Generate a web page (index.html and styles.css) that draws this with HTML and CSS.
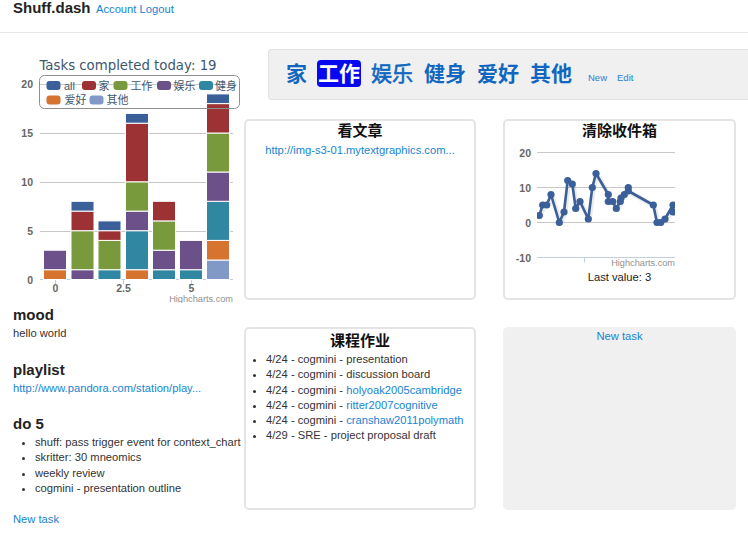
FILE: index.html
```html
<!DOCTYPE html>
<html>
<head>
<meta charset="utf-8">
<title>Shuff.dash</title>
<link rel="stylesheet" href="styles.css">
</head>
<body>
<header class="topbar">
  <span class="brand">Shuff.dash</span>
  <a class="toplink" href="#">Account</a> <a class="toplink" href="#">Logout</a>
</header>
<div class="main">
  <aside class="sidebar">
    <svg class="bar-chart" width="244" height="250" viewBox="0 53 244 250">
      <text class="hc-title" x="128" y="70" text-anchor="middle">Tasks completed today: 19</text>
      <g stroke="#c8c8c8" stroke-width="1">
        <line x1="40" y1="84.5" x2="233" y2="84.5"/>
        <line x1="40" y1="133.5" x2="233" y2="133.5"/>
        <line x1="40" y1="182.5" x2="233" y2="182.5"/>
        <line x1="40" y1="231.5" x2="233" y2="231.5"/>
      </g>
      <g stroke="#c0d0e0" stroke-width="1">
        <line x1="40" y1="279.5" x2="233" y2="279.5"/>
        <line x1="55.5" y1="279.5" x2="55.5" y2="284.5"/>
        <line x1="123.5" y1="279.5" x2="123.5" y2="284.5"/>
        <line x1="191.5" y1="279.5" x2="191.5" y2="284.5"/>
      </g>
      <g class="hc-label" text-anchor="end">
        <text x="33" y="88">20</text>
        <text x="33" y="137">15</text>
        <text x="33" y="186">10</text>
        <text x="33" y="235">5</text>
        <text x="33" y="284">0</text>
      </g>
      <g class="hc-label" text-anchor="middle">
        <text x="55.5" y="291.5">0</text>
        <text x="123.5" y="291.5">2.5</text>
        <text x="191.5" y="291.5">5</text>
      </g>
      <g stroke="#ffffff" stroke-width="1">
        <rect x="43.5" y="269.7" width="23" height="9.8" fill="#d6732f"/>
        <rect x="43.5" y="250.2" width="23" height="19.5" fill="#6c5089"/>

        <rect x="71" y="269.7" width="23" height="9.8" fill="#6c5089"/>
        <rect x="71" y="230.7" width="23" height="39" fill="#789a3c"/>
        <rect x="71" y="211.1" width="23" height="19.6" fill="#9c3234"/>
        <rect x="71" y="201.3" width="23" height="9.8" fill="#3b5f99"/>

        <rect x="98" y="269.7" width="23" height="9.8" fill="#3087a1"/>
        <rect x="98" y="240.4" width="23" height="29.3" fill="#789a3c"/>
        <rect x="98" y="230.7" width="23" height="9.7" fill="#9c3234"/>
        <rect x="98" y="220.9" width="23" height="9.8" fill="#3b5f99"/>

        <rect x="125.5" y="269.7" width="23" height="9.8" fill="#d6732f"/>
        <rect x="125.5" y="230.7" width="23" height="39" fill="#3087a1"/>
        <rect x="125.5" y="211.1" width="23" height="19.6" fill="#6c5089"/>
        <rect x="125.5" y="181.8" width="23" height="29.3" fill="#789a3c"/>
        <rect x="125.5" y="123.2" width="23" height="58.6" fill="#9c3234"/>
        <rect x="125.5" y="113.4" width="23" height="9.8" fill="#3b5f99"/>

        <rect x="152.5" y="269.7" width="23" height="9.8" fill="#3087a1"/>
        <rect x="152.5" y="250.2" width="23" height="19.5" fill="#6c5089"/>
        <rect x="152.5" y="220.9" width="23" height="29.3" fill="#789a3c"/>
        <rect x="152.5" y="201.3" width="23" height="19.6" fill="#9c3234"/>

        <rect x="179.5" y="269.7" width="23" height="9.8" fill="#3087a1"/>
        <rect x="179.5" y="240.4" width="23" height="29.3" fill="#6c5089"/>

        <rect x="206.5" y="260" width="23" height="19.5" fill="#8099c7"/>
        <rect x="206.5" y="240.4" width="23" height="19.6" fill="#d6732f"/>
        <rect x="206.5" y="201.3" width="23" height="39.1" fill="#3087a1"/>
        <rect x="206.5" y="172" width="23" height="29.3" fill="#6c5089"/>
        <rect x="206.5" y="133" width="23" height="39" fill="#789a3c"/>
        <rect x="206.5" y="103.6" width="23" height="29.4" fill="#9c3234"/>
        <rect x="206.5" y="93.9" width="23" height="9.7" fill="#3b5f99"/>
      </g>
      <rect x="39.5" y="75.5" width="200" height="33" rx="5" fill="none" stroke="#909090"/>
      <g>
        <rect x="46.5" y="81" width="14" height="9" rx="3" fill="#3b5f99"/>
        <rect x="82" y="81" width="14" height="9" rx="3" fill="#9c3234"/>
        <rect x="113.5" y="81" width="14" height="9" rx="3" fill="#789a3c"/>
        <rect x="157" y="81" width="14" height="9" rx="3" fill="#6c5089"/>
        <rect x="199" y="81" width="14" height="9" rx="3" fill="#3087a1"/>
        <rect x="46.5" y="95.5" width="14" height="9" rx="3" fill="#d6732f"/>
        <rect x="89.5" y="95.5" width="14" height="9" rx="3" fill="#8099c7"/>
      </g>
      <g class="hc-legend">
        <text x="64" y="89.5">all</text>
        <text x="98.5" y="89.5">家</text>
        <text x="130.5" y="89.5">工作</text>
        <text x="173.5" y="89.5">娱乐</text>
        <text x="215" y="89.5">健身</text>
        <text x="64.5" y="104">爱好</text>
        <text x="106.5" y="104">其他</text>
      </g>
      <text class="hc-credit" x="233" y="301.5" text-anchor="end">Highcharts.com</text>
    </svg>

    <section class="block first">
      <h3>mood</h3>
      <p>hello world</p>
    </section>
    <section class="block">
      <h3>playlist</h3>
      <p><a href="#">http://www.pandora.com/station/play...</a></p>
    </section>
    <section class="block">
      <h3>do 5</h3>
      <ul class="tasks">
        <li>shuff: pass trigger event for context_chart</li>
        <li>skritter: 30 mneomics</li>
        <li>weekly review</li>
        <li>cogmini - presentation outline</li>
      </ul>
    </section>
    <a class="new-task" href="#">New task</a>
  </aside>

  <div class="content">
    <nav class="well">
      <a class="cat" href="#">家</a>
      <a class="cat active" href="#">工作</a>
      <a class="cat thin" href="#">娱乐</a>
      <a class="cat" href="#">健身</a>
      <a class="cat" href="#">爱好</a>
      <a class="cat" href="#">其他</a>
      <a class="mini new" href="#">New</a>
      <a class="mini edit" href="#">Edit</a>
    </nav>

    <div class="cards">
      <div class="card">
        <h2>看文章</h2>
        <a class="card-link" href="#">http://img-s3-01.mytextgraphics.com...</a>
      </div>

      <div class="card">
        <h2>清除收件箱</h2>
        <svg class="line-chart" width="229" height="127" viewBox="505 143 229 127">
          <defs>
            <clipPath id="plot"><rect x="537" y="143" width="138" height="125"/></clipPath>
          </defs>
          <g stroke="#c8c8c8" stroke-width="1">
            <line x1="537" y1="152.5" x2="675" y2="152.5"/>
            <line x1="537" y1="187.5" x2="675" y2="187.5"/>
            <line x1="537" y1="222.5" x2="675" y2="222.5"/>
          </g>
          <g stroke="#c0d0e0" stroke-width="1">
            <line x1="537" y1="257.5" x2="675" y2="257.5"/>
            <line x1="584.5" y1="257.5" x2="584.5" y2="262.5"/>
          </g>
          <g class="hc-label" text-anchor="end">
            <text x="531" y="156.5">20</text>
            <text x="531" y="191.5">10</text>
            <text x="531" y="226.5">0</text>
            <text x="531" y="261.5">-10</text>
          </g>
          <g clip-path="url(#plot)">
            <polyline fill="none" stroke="rgba(0,0,0,0.08)" stroke-width="5" stroke-linejoin="round" transform="translate(1,1)"
              points="539.3,215.5 542.7,205 546.7,205 551,194.5 559.3,222.5 564,212 567.7,180.5 572.3,184 575.7,208.5 580,201.5 588.3,219 592.3,187.5 596,173.5 608.3,194.5 608.3,201.5 612.7,201.5 616.3,208.5 620.3,201.5 621,198 624.3,194.5 628.3,187.5 628.3,191 653.3,205 657,222.5 660.7,222.5 665,219 673,205 673,212 678,212"/>
            <polyline fill="none" stroke="#3b5f99" stroke-width="2.6" stroke-linejoin="round"
              points="539.3,215.5 542.7,205 546.7,205 551,194.5 559.3,222.5 564,212 567.7,180.5 572.3,184 575.7,208.5 580,201.5 588.3,219 592.3,187.5 596,173.5 608.3,194.5 608.3,201.5 612.7,201.5 616.3,208.5 620.3,201.5 621,198 624.3,194.5 628.3,187.5 628.3,191 653.3,205 657,222.5 660.7,222.5 665,219 673,205 673,212 678,212"/>
            <g fill="#3b5f99">
              <circle cx="539.3" cy="215.5" r="3.6"/>
              <circle cx="542.7" cy="205" r="3.6"/>
              <circle cx="546.7" cy="205" r="3.6"/>
              <circle cx="551" cy="194.5" r="3.6"/>
              <circle cx="559.3" cy="222.5" r="3.6"/>
              <circle cx="564" cy="212" r="3.6"/>
              <circle cx="567.7" cy="180.5" r="3.6"/>
              <circle cx="572.3" cy="184" r="3.6"/>
              <circle cx="575.7" cy="208.5" r="3.6"/>
              <circle cx="580" cy="201.5" r="3.6"/>
              <circle cx="588.3" cy="219" r="3.6"/>
              <circle cx="592.3" cy="187.5" r="3.6"/>
              <circle cx="596" cy="173.5" r="3.6"/>
              <circle cx="608.3" cy="194.5" r="3.6"/>
              <circle cx="608.3" cy="201.5" r="3.6"/>
              <circle cx="612.7" cy="201.5" r="3.6"/>
              <circle cx="616.3" cy="208.5" r="3.6"/>
              <circle cx="620.3" cy="201.5" r="3.6"/>
              <circle cx="621" cy="198" r="3.6"/>
              <circle cx="624.3" cy="194.5" r="3.6"/>
              <circle cx="628.3" cy="187.5" r="3.6"/>
              <circle cx="628.3" cy="191" r="3.6"/>
              <circle cx="653.3" cy="205" r="3.6"/>
              <circle cx="657" cy="222.5" r="3.6"/>
              <circle cx="660.7" cy="222.5" r="3.6"/>
              <circle cx="665" cy="219" r="3.6"/>
              <circle cx="673" cy="205" r="3.6"/>
              <circle cx="673" cy="212" r="3.6"/>
            </g>
          </g>
          <text class="hc-credit" x="675" y="266" text-anchor="end">Highcharts.com</text>
        </svg>
        <div class="last-value">Last value: 3</div>
      </div>

      <div class="card course">
        <h2>课程作业</h2>
        <ul class="course-list">
          <li>4/24 - cogmini - presentation</li>
          <li>4/24 - cogmini - discussion board</li>
          <li>4/24 - cogmini - <a href="#">holyoak2005cambridge</a></li>
          <li>4/24 - cogmini - <a href="#">ritter2007cognitive</a></li>
          <li>4/24 - cogmini - <a href="#">cranshaw2011polymath</a></li>
          <li>4/29 - SRE - project proposal draft</li>
        </ul>
      </div>

      <div class="card empty">
        <a class="card-link" href="#">New task</a>
      </div>
    </div>
  </div>
</div>
</body>
</html>
```

FILE: styles.css
```css
html, body {
  margin: 0;
  padding: 0;
  overflow: hidden;
}

body {
  font-family: "Liberation Sans", "Noto Sans CJK SC", sans-serif;
  font-size: 11.2px;
  line-height: 15px;
  color: #333;
  background: #fff;
  width: 748px;
}

a {
  color: #1784d1;
  text-decoration: none;
}

/* header */
.topbar {
  height: 33px;
  box-sizing: border-box;
  border-bottom: 1px solid #e6e6e6;
  padding: 0 13px;
  line-height: 16px;
}

.brand {
  font-size: 15px;
  font-weight: bold;
  color: #222;
  margin-right: 3px;
}

.toplink {
  font-size: 11.2px;
}

/* main layout */
.main {
  display: grid;
  grid-template-columns: 244px 504px;
}

.sidebar {
  display: flex;
  flex-direction: column;
}

.bar-chart {
  display: block;
  margin-top: 20px;
}

.hc-title {
  font-family: "DejaVu Sans", sans-serif;
  font-size: 13.3px;
  fill: #3e576f;
}

.hc-label {
  font-family: "Liberation Sans", sans-serif;
  font-size: 10.5px;
  font-weight: bold;
  fill: #666;
}

.hc-legend {
  font-family: "Liberation Sans", "Noto Sans CJK SC", sans-serif;
  font-size: 11px;
  fill: #3e576f;
}

.hc-credit {
  font-family: "Liberation Sans", sans-serif;
  font-size: 9.2px;
  fill: #909090;
}

.block {
  padding-left: 13px;
  margin-top: 19.5px;
}

.block.first {
  margin-top: 3px;
}

.block h3 {
  margin: 0 0 2px;
  font-size: 15px;
  line-height: 18px;
  font-weight: bold;
  color: #222;
}

.block p {
  margin: 0;
}

.tasks {
  margin: 2px 0 0;
  padding-left: 22px;
}

.tasks li {
  line-height: 15.3px;
  white-space: nowrap;
}

.new-task {
  display: block;
  margin-top: 16px;
  padding-left: 13px;
}

/* content */
.content {
  padding-top: 16px;
}

.well {
  margin-left: 24px;
  height: 51px;
  box-sizing: border-box;
  background: #f0f0f0;
  border: 1px solid #e2e2e2;
  border-right: none;
  border-radius: 4px 0 0 4px;
  padding: 10px 0 0 16px;
  display: flex;
  align-items: baseline;
  gap: 9px;
}

.cat {
  font-family: "Liberation Sans", "Noto Sans CJK SC", sans-serif;
  font-size: 21px;
  line-height: 27px;
  font-weight: bold;
  color: #1167bf;
  padding: 0 1px;
  border-radius: 4px;
}

.cat.thin {
  font-weight: normal;
  -webkit-text-stroke: 0.6px currentColor;
}

.cat.active {
  background: #0808f0;
  color: #fff;
}

.mini {
  font-size: 9.5px;
  color: #2a80d0;
}

.mini.new {
  margin-left: 6px;
}

.mini.edit {
  margin-left: 1px;
}

.cards {
  margin-top: 19px;
  display: grid;
  grid-template-columns: 232px 233px;
  grid-template-rows: 181px 183px;
  column-gap: 27px;
  row-gap: 27px;
}

.card {
  border: 2px solid #e4e4e4;
  border-radius: 5px;
  text-align: center;
  overflow: hidden;
}

.card h2 {
  margin: 0;
  font-family: "Liberation Sans", "Noto Sans CJK SC", sans-serif;
  font-size: 15px;
  line-height: 20px;
  font-weight: bold;
  color: #111;
}

.card-link {
  display: block;
  margin-top: 2px;
}

.line-chart {
  display: block;
  margin-top: 2px;
}

.last-value {
  color: #222;
}

.card.course {
  padding-top: 2px;
}

.course-list {
  margin: 1px 0 0;
  padding-left: 20px;
  text-align: left;
}

.course-list li {
  line-height: 15.3px;
  white-space: nowrap;
}

.card.empty {
  background: #f0f0f0;
  border-color: #f0f0f0;
}

.card.empty .card-link {
  margin-top: 0;
}
```
